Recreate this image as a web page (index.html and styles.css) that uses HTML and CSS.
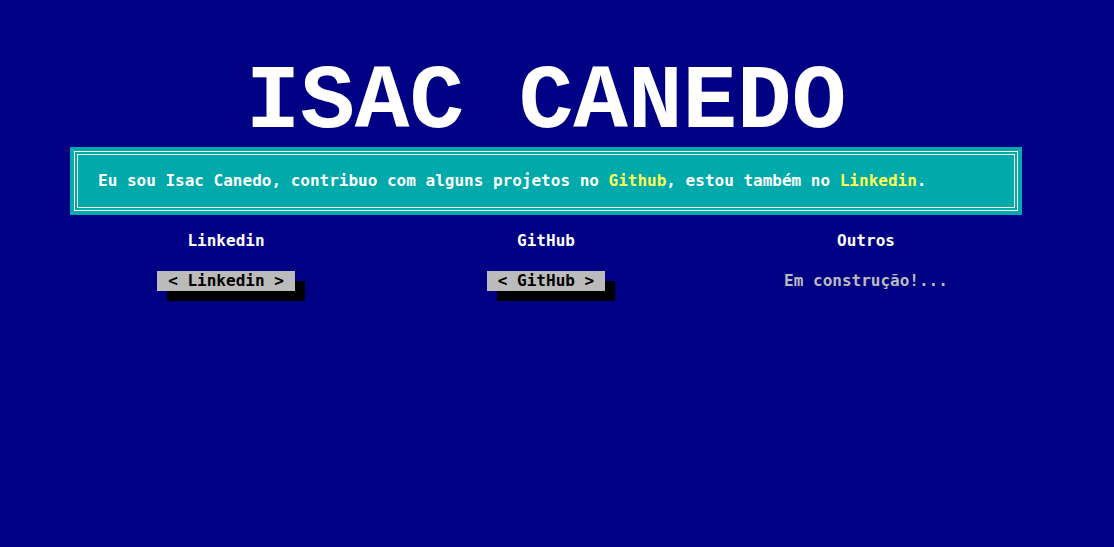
FILE: index.html
```html
<!DOCTYPE html>
<html lang="pt-BR">
<head>
<meta charset="utf-8">
<meta name="viewport" content="width=device-width, initial-scale=1">
<title>Isac Canedo</title>
<link rel="stylesheet" href="styles.css">
</head>
<body class="page">
<main class="container">
  <h1 class="title">ISAC CANEDO</h1>
  <div class="panel">
    <p class="panel-text">Eu sou Isac Canedo, contribuo com alguns projetos no <a class="link" href="#github">Github</a>, estou também no <a class="link" href="#linkedin">Linkedin</a>.</p>
  </div>
  <div class="columns">
    <section class="column" id="linkedin">
      <h2 class="heading">Linkedin</h2>
      <button class="button" type="button">&lt; Linkedin &gt;</button>
    </section>
    <section class="column" id="github">
      <h2 class="heading">GitHub</h2>
      <button class="button" type="button">&lt; GitHub &gt;</button>
    </section>
    <section class="column">
      <h2 class="heading">Outros</h2>
      <p class="note">Em construção!...</p>
    </section>
  </div>
</main>
</body>
</html>
```
FILE: styles.css
```css
* {
  box-sizing: border-box;
}

.page {
  margin: 0;
  background: #000084;
  color: #bbbbbb;
  font: bold 16px/20px "DejaVu Sans Mono", monospace;
}

.container {
  padding: 59px 92px 40px 70px;
}

.title {
  margin: 0;
  color: #ffffff;
  font: bold 91px/88px "Liberation Mono", monospace;
  text-align: center;
}

.panel {
  padding: 4px;
  background: #00aaaa;
  color: #ffffff;
}

.panel-text {
  margin: 0;
  padding: 16px 20px;
  border: 4px double #ffffff;
}

.link {
  color: #ffff55;
  text-decoration: none;
}

.columns {
  display: grid;
  grid-template-columns: repeat(3, 1fr);
  gap: 8px;
  margin-top: 16px;
}

.column {
  display: flex;
  flex-direction: column;
  align-items: center;
  gap: 20px;
}

.heading {
  margin: 0;
  color: #ffffff;
  font: inherit;
}

.button {
  padding: 0 11px;
  border: 0;
  background: #bbbbbb;
  color: #000000;
  font: inherit;
  box-shadow: 10px 10px 0 #000000;
  cursor: pointer;
}

.note {
  margin: 0;
}
```
